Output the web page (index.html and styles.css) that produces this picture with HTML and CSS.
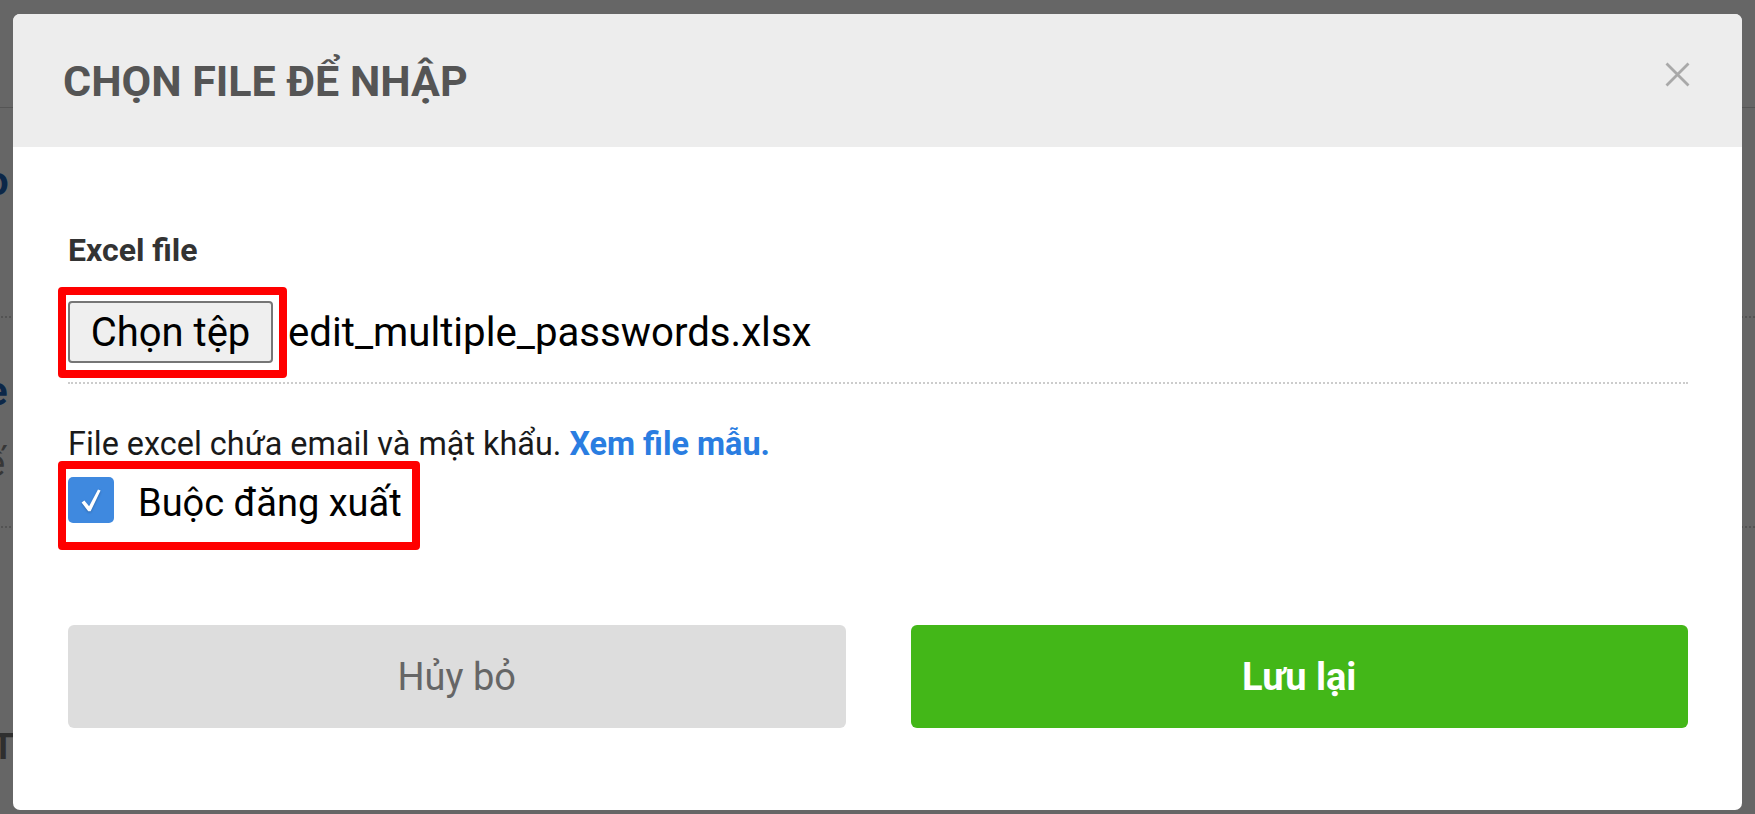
FILE: index.html
```html
<!DOCTYPE html>
<html lang="vi">
<head>
<meta charset="utf-8">
<title>Chọn file để nhập</title>
<link rel="stylesheet" href="styles.css">
</head>
<body>
<div class="page">
  <div class="page-top"></div>
  <div class="page-item">
    <div class="page-title">o</div>
    <div class="page-sub">r</div>
  </div>
  <div class="page-item">
    <div class="page-title">e</div>
    <div class="page-sub">ế</div>
  </div>
  <div class="page-foot">T</div>
</div>
<div class="backdrop"></div>
<div class="modal">
  <div class="modal-header">
    <h1 class="modal-title">CHỌN FILE ĐỂ NHẬP</h1>
    <span class="modal-close" aria-label="Đóng">
      <svg viewBox="0 0 25 25" width="25" height="25"><path d="M1.5 1.5 L23.5 23.5 M23.5 1.5 L1.5 23.5" stroke="#a9a9a9" stroke-width="2.8" fill="none"/></svg>
    </span>
  </div>
  <div class="modal-body">
    <div class="field-label">Excel file</div>
    <div class="file-row">
      <span class="file-btn">Chọn tệp</span>
      <span class="file-name">edit_multiple_passwords.xlsx</span>
      <span class="mark mark-file"></span>
    </div>
    <p class="help">File excel chứa email và mật khẩu. <a class="help-link">Xem file mẫu.</a></p>
    <div class="check-row">
      <span class="check-box">
        <svg viewBox="0 0 20 23" width="20" height="23"><path d="M0.6 13.4 L3.4 11.4 L8.1 17.2 L17 0.6 L19.6 1.6 L9.6 22.2 L7.2 22.2 Z" fill="#ffffff"/></svg>
      </span>
      <span class="check-label">Buộc đăng xuất</span>
      <span class="mark mark-check"></span>
    </div>
    <div class="actions">
      <button class="btn btn-cancel">Hủy bỏ</button>
      <button class="btn btn-save">Lưu lại</button>
    </div>
  </div>
</div>
</body>
</html>
```
FILE: styles.css
```css
html, body {
  margin: 0;
  padding: 0;
}
body {
  width: 1755px;
  height: 814px;
  overflow: hidden;
  background: #ffffff;
  font-family: Roboto, "Noto Sans", sans-serif;
}

/* underlying page, mostly hidden */
.page {
  margin-left: -14px;
}
.page-top {
  height: 107px;
  border-bottom: 1px solid #d4d4d4;
}
.page-item {
  padding-top: 50px;
  height: 158px;
  border-bottom: 2px dotted #d0d0d0;
}
.page-title {
  font-weight: 700;
  font-size: 40px;
  line-height: 48px;
  color: #1f62b4;
}
.page-sub {
  margin-top: 28px;
  font-size: 36px;
  line-height: 40px;
  color: #8a8a8a;
}
.page-foot {
  margin-top: 198px;
  font-weight: 700;
  font-size: 36px;
  color: #777;
  margin-left: 6px;
}

.backdrop {
  position: fixed;
  inset: 0;
  background: rgba(0, 0, 0, 0.6);
}

.modal {
  position: fixed;
  left: 13px;
  top: 14px;
  width: 1729px;
  background: #ffffff;
  border-radius: 7px;
  overflow: hidden;
}

.modal-header {
  height: 133px;
  background: #ededed;
  display: flex;
  align-items: center;
  justify-content: space-between;
  padding: 0 52px 0 50px;
}
.modal-title {
  margin: 0;
  font-size: 43px;
  line-height: 50px;
  font-weight: 700;
  color: #555555;
}
.modal-close {
  align-self: flex-start;
  margin-top: 48px;
  width: 25px;
  height: 25px;
  display: block;
}
.modal-close svg {
  display: block;
}

.modal-body {
  padding: 84px 54px 82px 55px;
}

.field-label {
  font-size: 32px;
  line-height: 38px;
  font-weight: 700;
  color: #333333;
}

.file-row {
  position: relative;
  margin-top: 32px;
  display: flex;
  align-items: center;
  gap: 15px;
  padding-bottom: 19px;
  border-bottom: 2px dotted #cccccc;
}
.file-btn {
  box-sizing: border-box;
  height: 62px;
  width: 205px;
  display: flex;
  align-items: center;
  justify-content: center;
  background: #efefef;
  border: 2px solid #767676;
  border-radius: 4px;
  font-size: 40px;
  color: #000;
}
.file-name {
  font-size: 40.2px;
  color: #000;
}

.mark {
  position: absolute;
  box-sizing: border-box;
  border: 8px solid #ff0000;
  border-radius: 4px;
  pointer-events: none;
}
.mark-file {
  left: -10px;
  top: -14px;
  width: 229px;
  height: 91px;
}
.mark-check {
  left: -10px;
  top: -16px;
  width: 362px;
  height: 89px;
}

.help {
  margin: 41px 0 0;
  font-size: 32.4px;
  line-height: 38px;
  color: #1a1a1a;
}
.help-link {
  font-weight: 700;
  color: #2a7de1;
}

.check-row {
  position: relative;
  margin-top: 14px;
  display: flex;
  align-items: flex-start;
  gap: 24px;
}
.check-box {
  width: 46px;
  height: 46px;
  border-radius: 5px;
  background: #3f89df;
  display: flex;
  align-items: center;
  justify-content: center;
}
.check-box svg {
  display: block;
  filter: drop-shadow(0 1px 1px rgba(0, 0, 0, 0.25));
}
.check-label {
  font-size: 38px;
  line-height: 52px;
  color: #000;
}

.actions {
  margin-top: 96px;
  display: grid;
  grid-template-columns: 1fr 1fr;
  gap: 65px;
}
.btn {
  height: 103px;
  border: none;
  border-radius: 6px;
  font-family: Roboto, "Noto Sans", sans-serif;
  font-size: 38px;
}
.btn-cancel {
  background: #dddddd;
  color: #666666;
}
.btn-save {
  background: #43b718;
  color: #ffffff;
  font-weight: 700;
}
```
